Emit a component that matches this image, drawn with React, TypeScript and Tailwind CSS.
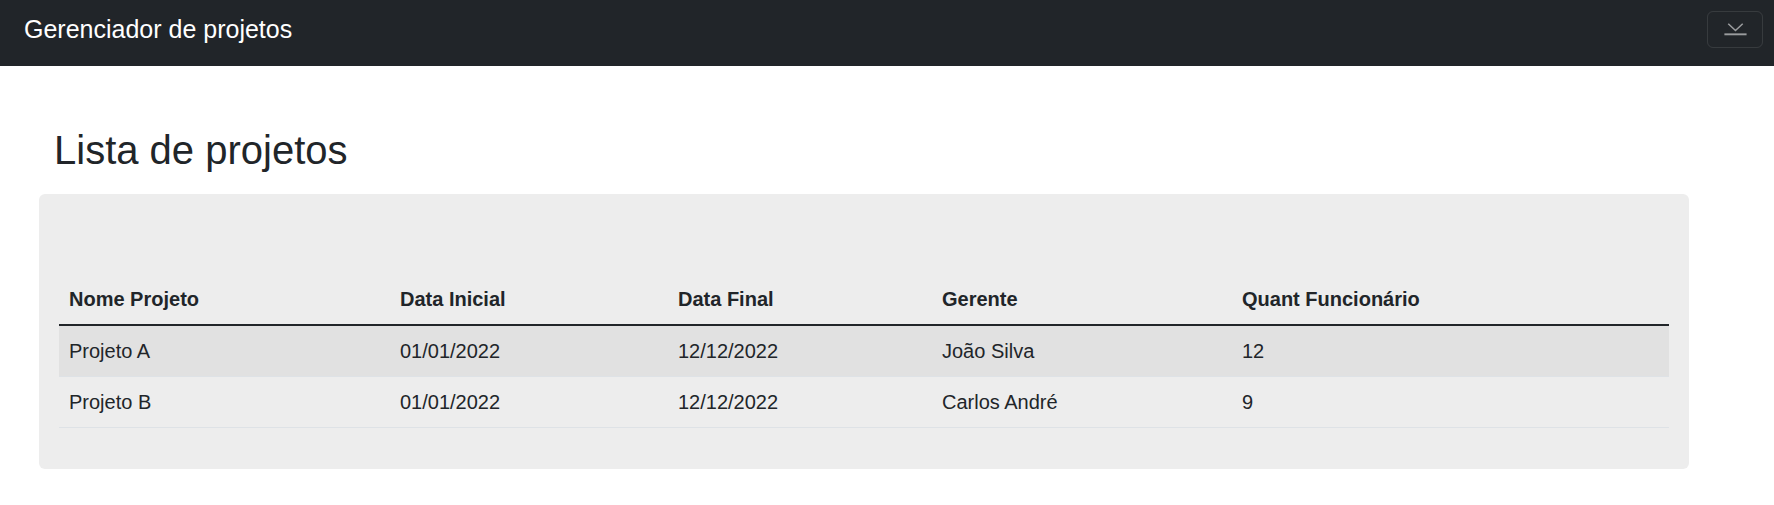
import React from 'react';

type Projeto = {
  nome: string;
  dataInicial: string;
  dataFinal: string;
  gerente: string;
  quantFuncionario: number;
};

const projetos: Projeto[] = [
  {
    nome: 'Projeto A',
    dataInicial: '01/01/2022',
    dataFinal: '12/12/2022',
    gerente: 'João Silva',
    quantFuncionario: 12,
  },
  {
    nome: 'Projeto B',
    dataInicial: '01/01/2022',
    dataFinal: '12/12/2022',
    gerente: 'Carlos André',
    quantFuncionario: 9,
  },
];

const colunas = [
  { label: 'Nome Projeto', width: 'w-[331px]' },
  { label: 'Data Inicial', width: 'w-[278px]' },
  { label: 'Data Final', width: 'w-[264px]' },
  { label: 'Gerente', width: 'w-[300px]' },
  { label: 'Quant Funcionário', width: 'w-[437px]' },
];

const TogglerIcon: React.FC = () => (
  <svg width="56" height="37" viewBox="0 0 56 37" fill="none">
    <polyline
      points="21,12.5 28.5,19.5 36,12.5"
      stroke="rgba(255,255,255,0.55)"
      strokeWidth="1.6"
    />
    <line
      x1="17"
      y1="23.5"
      x2="40"
      y2="23.5"
      stroke="rgba(255,255,255,0.55)"
      strokeWidth="2"
    />
  </svg>
);

const App: React.FC = () => {
  return (
    <div className="min-h-[505px] bg-white font-['Liberation_Sans',Arial,sans-serif] text-[#212529]">
      {/* Navbar */}
      <nav className="flex items-center justify-between bg-[#212529] pl-6 pr-[11px] pt-[11px] pb-[17px]">
        <a className="text-[25px] leading-[37.5px] text-white">
          Gerenciador de projetos
        </a>
        <button
          type="button"
          className="flex h-[37px] w-[56px] items-center justify-center rounded-[6px] border border-white/10"
        >
          <TogglerIcon />
        </button>
      </nav>

      {/* Titulo */}
      <h1 className="ml-[54px] mt-[60px] mb-[20px] text-[40px] font-normal leading-[48px]">
        Lista de projetos
      </h1>

      {/* Card com a tabela */}
      <div className="ml-[39px] w-[1650px] rounded-[6px] bg-[#ededed] px-[20px] pt-[80px] pb-[41px]">
        <table className="w-full table-fixed border-collapse text-left text-[20px]">
          <thead>
            <tr>
              {colunas.map(col => (
                <th
                  key={col.label}
                  className={`${col.width} border-b-2 border-[#212529] py-[10px] pl-[10px] font-bold leading-[30px]`}
                >
                  {col.label}
                </th>
              ))}
            </tr>
          </thead>
          <tbody>
            {projetos.map((p, i) => (
              <tr key={p.nome} className={i % 2 === 0 ? 'bg-[#e1e1e1]' : ''}>
                <td className="border-b border-[#dee2e6] py-[10px] pl-[10px] leading-[30px]">
                  {p.nome}
                </td>
                <td className="border-b border-[#dee2e6] py-[10px] pl-[10px] leading-[30px]">
                  {p.dataInicial}
                </td>
                <td className="border-b border-[#dee2e6] py-[10px] pl-[10px] leading-[30px]">
                  {p.dataFinal}
                </td>
                <td className="border-b border-[#dee2e6] py-[10px] pl-[10px] leading-[30px]">
                  {p.gerente}
                </td>
                <td className="border-b border-[#dee2e6] py-[10px] pl-[10px] leading-[30px]">
                  {p.quantFuncionario}
                </td>
              </tr>
            ))}
          </tbody>
        </table>
      </div>
    </div>
  );
};

export default App;
